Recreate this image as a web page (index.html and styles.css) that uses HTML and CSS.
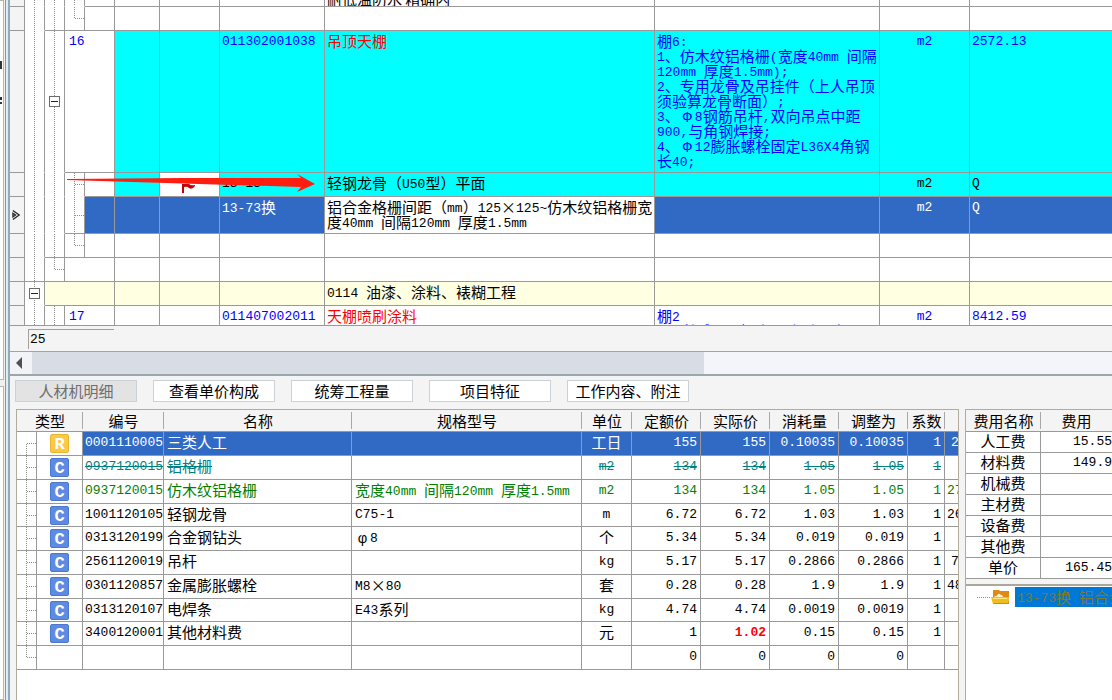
FILE: index.html
```html
<!DOCTYPE html>
<html lang="zh-CN">
<head>
<meta charset="utf-8">
<title>计价明细</title>
<link rel="stylesheet" href="styles.css">
</head>
<body>
<div class="app">
  <aside class="dock">
    <div class="dock-pane dock-top"><i class="mark mark-a"></i><i class="mark mark-b"></i></div>
    <div class="dock-pane dock-bottom"></div>
  </aside>
  <main class="main">
    <section class="bill">
      <table class="bill-table">
        <colgroup>
          <col class="w15"><col class="w20"><col class="w20"><col class="w20"><col class="w30"><col class="w45"><col class="w60"><col class="w105"><col class="w330"><col class="w225"><col class="w90"><col>
        </colgroup>
        <tbody>
        <tr class="r-cut">
          <td class="rh"></td><td class="tr v nb"></td><td class="tr v nb"></td><td class="tr v nb"></td><td></td><td></td><td></td><td></td>
          <td><div class="cut-top">耐低温防水 精确内</div></td><td></td><td></td><td></td>
        </tr>
        <tr class="r24">
          <td class="rh"></td><td class="tr v nb"></td><td class="tr v"></td><td class="tr end"></td><td></td><td></td><td></td><td></td><td></td><td></td><td></td><td></td>
        </tr>
        <tr class="r142 cyan">
          <td class="rh"></td><td class="tr v nb"></td><td class="tr v nb box"><button class="toggle" type="button" aria-label="折叠 16"></button></td>
          <td colspan="2" class="blue n plain seq">16</td><td></td><td></td><td class="blue n">011302001038</td><td class="red">吊顶天棚</td>
          <td class="blue desc">棚<span class="n">6:</span><br><span class="n">1</span>、仿木纹铝格栅<span class="n">(</span>宽度<span class="n">40mm </span>间隔<br><span class="n">120mm </span>厚度<span class="n">1.5mm);</span><br><span class="n">2</span>、专用龙骨及吊挂件（上人吊顶<br>须验算龙骨断面）<span class="n">;</span><br><span class="n">3</span>、<span class="phi">Φ</span><span class="n">8</span>钢筋吊杆<span class="n">,</span>双向吊点中距<br><span class="n">900,</span>与角钢焊接<span class="n">;</span><br><span class="n">4</span>、<span class="phi">Φ</span><span class="n">12</span>膨胀螺栓固定<span class="n">L36X4</span>角钢<br>长<span class="n">40;</span></td>
          <td class="blue n mid">m2</td><td class="blue n">2572.13</td>
        </tr>
        <tr class="r24 cyan">
          <td class="rh"></td><td class="tr v nb"></td><td class="tr v nb"></td><td class="tr v tick nb"></td><td class="plain"></td><td></td>
          <td class="plain"><svg class="flag" viewBox="0 0 14 10"><path d="M0 0h2v9H0z M2 0h5q2 2 6 1v1q-3 4-6 2-2-2-5-1z" fill="#c40000"/></svg></td>
          <td class="n">13-13</td><td>轻钢龙骨（<span class="n">U50</span>型）平面</td><td></td><td class="n mid">m2</td><td class="n">Q</td>
        </tr>
        <tr class="r37 sel">
          <td class="rh"><svg class="cursor" viewBox="0 0 10 12"><path d="M1 1l7 5-7 5M1 4l3 2-3 2z" fill="none" stroke="#222" stroke-width="1.4"/></svg></td><td class="tr v nb"></td><td class="tr v nb"></td><td class="tr v tick"></td><td></td><td></td><td></td>
          <td><span class="n">13-73</span>换</td><td class="plain">铝合金格栅间距（<span class="n">mm</span>）<span class="n">125</span>×<span class="n">125~</span>仿木纹铝格栅宽<br>度<span class="n">40mm </span>间隔<span class="n">120mm </span>厚度<span class="n">1.5mm</span></td><td></td><td class="n mid">m2</td><td class="n">Q</td>
        </tr>
        <tr class="r24">
          <td class="rh"></td><td class="tr v nb"></td><td class="tr v"></td><td class="tr end"></td><td></td><td></td><td></td><td></td><td></td><td></td><td></td><td></td>
        </tr>
        <tr class="r24">
          <td class="rh"></td><td class="tr v"></td><td class="tr end"></td><td colspan="2"></td><td></td><td></td><td></td><td></td><td></td><td></td><td></td>
        </tr>
        <tr class="r24 cream">
          <td class="rh"></td><td class="tr v nb box"><button class="toggle" type="button" aria-label="折叠 0114"></button></td><td colspan="3"></td><td></td><td></td><td></td>
          <td><span class="n">0114 </span>油漆、涂料、裱糊工程</td><td></td><td></td><td></td>
        </tr>
        <tr class="r20">
          <td class="rh"></td><td class="tr v"></td><td class="tr v"></td><td colspan="2" class="blue n seq">17</td><td></td><td></td><td class="blue n">011407002011</td>
          <td class="red">天棚喷刷涂料</td><td class="blue"><div class="cut">棚<span class="n">2</span><br><span class="n">1</span>、刮腻子、打磨，喷刷两遍面</div></td><td class="blue n mid">m2</td><td class="blue n">8412.59</td>
        </tr>
        </tbody>
      </table>
      <svg class="arrow" viewBox="0 0 250 20"><path d="M0 5L116 4 234 4 230 0 248 10 230 18 234 13 0 6z" fill="#ff1d10"/></svg>
    </section>
    <div class="status"><input class="count" type="text" value="25" aria-label="记录数"></div>
    <div class="hscroll"><button class="hbtn" type="button" aria-label="向左滚动"><svg viewBox="0 0 7 12"><path d="M6 0v12L0 6z" fill="#505050"/></svg></button><div class="thumb"></div></div>
    <section class="detail">
      <nav class="tabs">
        <button type="button" class="tab on">人材机明细</button>
        <button type="button" class="tab">查看单价构成</button>
        <button type="button" class="tab">统筹工程量</button>
        <button type="button" class="tab">项目特征</button>
        <button type="button" class="tab">工作内容、附注</button>
      </nav>
      <div class="panes">
        <div class="pane left-pane">
          <table class="res">
            <colgroup><col class="w20"><col class="w46"><col class="w81"><col class="w188"><col class="w230"><col class="w50"><col class="w69"><col class="w69"><col class="w69"><col class="w69"><col class="w37"><col></colgroup>
            <thead><tr><th colspan="2">类型</th><th>编号</th><th>名称</th><th>规格型号</th><th>单位</th><th>定额价</th><th>实际价</th><th>消耗量</th><th>调整为</th><th>系数</th><th></th></tr></thead>
            <tbody>
            <tr class="sel"><td class="tr first"></td><td class="ico"><span class="badge r">R</span></td><td class="n">0001110005</td><td>三类人工</td><td></td><td class="mid">工日</td><td class="n num">155</td><td class="n num">155</td><td class="n num">0.10035</td><td class="n num">0.10035</td><td class="n num">1</td><td class="n tail-b">2</td></tr>
            <tr class="old"><td class="tr v tick"></td><td class="ico"><span class="badge">C</span></td><td class="n">0937120015</td><td>铝格栅</td><td></td><td class="n mid">m2</td><td class="n num">134</td><td class="n num">134</td><td class="n num">1.05</td><td class="n num">1.05</td><td class="n num">1</td><td></td></tr>
            <tr class="new"><td class="tr v tick"></td><td class="ico"><span class="badge">C</span></td><td class="n">0937120015</td><td>仿木纹铝格栅</td><td>宽度<span class="n">40mm </span>间隔<span class="n">120mm </span>厚度<span class="n">1.5mm</span></td><td class="n mid">m2</td><td class="n num">134</td><td class="n num">134</td><td class="n num">1.05</td><td class="n num">1.05</td><td class="n num">1</td><td class="n">27</td></tr>
            <tr><td class="tr v tick"></td><td class="ico"><span class="badge">C</span></td><td class="n">1001120105</td><td>轻钢龙骨</td><td class="n">C75-1</td><td class="n mid">m</td><td class="n num">6.72</td><td class="n num">6.72</td><td class="n num">1.03</td><td class="n num">1.03</td><td class="n num">1</td><td class="n">26</td></tr>
            <tr><td class="tr v tick"></td><td class="ico"><span class="badge">C</span></td><td class="n">0313120199</td><td>合金钢钻头</td><td><span class="phi">φ</span><span class="n">8</span></td><td class="mid">个</td><td class="n num">5.34</td><td class="n num">5.34</td><td class="n num">0.019</td><td class="n num">0.019</td><td class="n num">1</td><td></td></tr>
            <tr><td class="tr v tick"></td><td class="ico"><span class="badge">C</span></td><td class="n">2561120019</td><td>吊杆</td><td></td><td class="n mid">kg</td><td class="n num">5.17</td><td class="n num">5.17</td><td class="n num">0.2866</td><td class="n num">0.2866</td><td class="n num">1</td><td class="n tail-b">7</td></tr>
            <tr><td class="tr v tick"></td><td class="ico"><span class="badge">C</span></td><td class="n">0301120857</td><td>金属膨胀螺栓</td><td><span class="n">M8</span>×<span class="n">80</span></td><td class="mid">套</td><td class="n num">0.28</td><td class="n num">0.28</td><td class="n num">1.9</td><td class="n num">1.9</td><td class="n num">1</td><td class="n">48</td></tr>
            <tr><td class="tr v tick"></td><td class="ico"><span class="badge">C</span></td><td class="n">0313120107</td><td>电焊条</td><td><span class="n">E43</span>系列</td><td class="n mid">kg</td><td class="n num">4.74</td><td class="n num">4.74</td><td class="n num">0.0019</td><td class="n num">0.0019</td><td class="n num">1</td><td></td></tr>
            <tr><td class="tr v tick"></td><td class="ico"><span class="badge">C</span></td><td class="n">3400120001</td><td>其他材料费</td><td></td><td class="mid">元</td><td class="n num">1</td><td class="n num hot">1.02</td><td class="n num">0.15</td><td class="n num">0.15</td><td class="n num">1</td><td></td></tr>
            <tr><td class="tr end"></td><td></td><td></td><td></td><td></td><td></td><td class="n num">0</td><td class="n num">0</td><td class="n num">0</td><td class="n num">0</td><td></td><td></td></tr>
            </tbody>
          </table>
        </div>
        <div class="pane right-pane">
          <table class="fee">
            <colgroup><col class="w75"><col></colgroup>
            <thead><tr><th>费用名称</th><th>费用</th></tr></thead>
            <tbody>
            <tr><td>人工费</td><td class="n">15.55</td></tr>
            <tr><td>材料费</td><td class="n">149.9</td></tr>
            <tr><td>机械费</td><td></td></tr>
            <tr><td>主材费</td><td></td></tr>
            <tr><td>设备费</td><td></td></tr>
            <tr><td>其他费</td><td></td></tr>
            <tr><td>单价</td><td class="n">165.45</td></tr>
            </tbody>
          </table>
          <div class="split"></div>
          <div class="node">
            <i class="dots"></i>
            <svg class="folder" viewBox="0 0 19 16"><path d="M2 1h6l1 1h9v6H2z" fill="#e08a12"/><path d="M3 8q2-2 3-1 1-4 4-1 2 0 2 2z" fill="#fff3d0"/><path d="M0 8h18l-1 7H2z" fill="#f3bd17"/><path d="M2 9h14v1H2z" fill="#ffe680"/><path d="M2 14h15l1-6v7H2z" fill="#d98a10"/></svg>
            <span class="node-text"><span class="n">13-73</span>换<span class="n"> </span>铝合金</span>
          </div>
        </div>
      </div>
    </section>
  </main>
</div>
</body>
</html>
```
FILE: styles.css
```css
* { box-sizing: border-box; }
body {
  margin: 0;
  font: 15px/15px "Noto Sans CJK SC", sans-serif;
  color: #000;
  background: #f4f4f4;
}
button, input { font: inherit; margin: 0; padding: 0; border-radius: 0; }
.n { font-family: "Liberation Mono", "Noto Sans CJK SC", monospace; font-size: 13px; white-space: pre; }
span.n { line-height: 0; vertical-align: 1px; }
.phi { display: inline-block; width: 15px; text-align: center; font-family: "Liberation Mono", monospace; font-size: 15px; line-height: 0; }

.app { display: flex; height: 100vh; overflow: hidden; }
.dock {
  flex: none;
  width: 10px;
  display: flex;
  flex-direction: column;
  gap: 6px;
  border-right: 2px solid #8fabbe;
  background: linear-gradient(to right, #f0f0f0 0 5px, #8d979c 5px 6px, #e4e9ec 6px 8px);
}
.dock-pane { width: 4px; background: #fff; border: solid #b9b5a5; border-width: 1px 1px 1px 0; overflow: hidden; }
.dock-top { height: 380px; display: flex; flex-direction: column; padding-top: 60px; gap: 28px; }
.dock-bottom { flex: 1; }
.mark { width: 2px; height: 8px; background: #333; }
.mark-b { height: 7px; background: repeating-linear-gradient(#333 0 3px, #fff 3px 5px); }
.main { flex: 1; min-width: 0; display: flex; flex-direction: column; }

/* shared grid */
table { width: 100%; table-layout: fixed; border-collapse: separate; border-spacing: 0; }
td, th { font-weight: normal; border: solid #999; border-width: 0 1px 1px 0; white-space: nowrap; overflow: hidden; }
td { padding: 2px 2px 0; vertical-align: top; text-align: left; background-color: #fff; }
td.n { padding-top: 3px; }
td:last-child { border-right: 0; }
.w15 { width: 15px; } .w20 { width: 20px; } .w30 { width: 30px; } .w37 { width: 37px; }
.w45 { width: 45px; } .w46 { width: 46px; } .w50 { width: 50px; } .w60 { width: 60px; }
.w69 { width: 69px; } .w75 { width: 75px; } .w81 { width: 81px; } .w90 { width: 90px; }
.w105 { width: 105px; } .w188 { width: 188px; } .w225 { width: 225px; } .w230 { width: 230px; } .w330 { width: 330px; }
.mid { text-align: center; }
td.num { text-align: right; padding-right: 3px; }
td.seq { padding-left: 4px; }
.blue { color: #00f; }
.red { color: #f00; }

/* tree guides */
td.tr {
  padding: 0;
  background-color: #fff;
  background-repeat: no-repeat;
  --down: repeating-linear-gradient(#8c8c8c 0 1px, #fff 1px 2px);
  --side: repeating-linear-gradient(to right, #8c8c8c 0 1px, #fff 1px 2px);
}
td.v { background-image: var(--down); background-size: 1px 100%; background-position: 9px 0; }
td.tick { background-image: var(--down), var(--side); background-size: 1px 100%, 9px 1px; background-position: 9px 0, 10px 50%; }
td.end { background-image: var(--down), var(--side); background-size: 1px 50%, 9px 1px; background-position: 9px 0, 10px 50%; }
td.first { background-image: var(--down), var(--side); background-size: 1px 50%, 9px 1px; background-position: 9px 100%, 10px 50%; }
td.nb { border-bottom-color: transparent; }
td.box { vertical-align: middle; text-align: center; }
.toggle {
  display: block;
  width: 11px;
  height: 11px;
  margin: 0 auto;
  border: 1px solid #6b6b6b;
  background: linear-gradient(#222, #222) center / 7px 1px no-repeat #fff;
}

/* bill grid */
.bill { position: relative; flex: none; }
.rh { background-color: #f4f4f4; padding: 0; }
.r-cut { height: 7px; } .r20 { height: 20px; } .r24 { height: 24px; } .r37 { height: 37px; } .r142 { height: 142px; }
.r-cut td { padding-top: 0; padding-bottom: 0; }
.cut-top { height: 6px; display: flex; align-items: flex-end; overflow: hidden; }
.cut { height: 17px; overflow: hidden; }
.cyan td:not(.rh):not(.tr):not(.plain) { background-color: #0ff; }
.cream td:not(.rh):not(.tr) { background-color: #ffffe1; }
.sel td:not(.rh):not(.tr):not(.plain):not(.ico) { background-color: #316ac5; color: #fff; }
.flag { display: block; width: 14px; height: 10px; margin: 9px 0 0 20px; }
.cursor { display: block; width: 9px; height: 12px; margin: 12px 0 0 2px; }
.arrow { position: absolute; left: 57px; top: 174px; width: 250px; height: 20px; }

.status { flex: none; height: 25px; padding: 3px 0 0 18px; }
.count { display: block; width: 86px; height: 20px; padding: 0 1px; border: solid #a0a0a0; border-width: 1px 0 0 1px; background: #f4f4f4; font-family: "Liberation Mono", monospace; font-size: 13px; }
.hscroll { flex: none; display: flex; height: 25px; border-top: 1px solid #a3a3a3; border-bottom: 2px solid #9aa7ac; background: #f4f5fa; }
.hbtn { width: 22px; border: 0; background: #f1f3f6; display: flex; align-items: center; justify-content: center; }
.hbtn svg { width: 7px; height: 12px; margin-right: 4px; }
.thumb { width: 61%; background: #d8dce4; }

/* detail area */
.detail { flex: 1; min-height: 0; display: flex; flex-direction: column; gap: 7px; padding: 4px 0 0 6px; background: #f4f4f4; }
.tabs { display: flex; gap: 16px; margin-left: -1px; }
.tab { width: 122px; height: 22px; padding-bottom: 2px; border: 1px solid #ccd0da; background: #fff; color: #000; white-space: nowrap; line-height: 15px; }
.tab.on { background: #e3e3e3; color: #6d6d6d; }
.panes { flex: 1; min-height: 0; display: flex; gap: 6px; }
.pane { background: #fff; border: solid #b0ac9c; border-width: 1px 0 0 1px; overflow: hidden; }
.left-pane { flex: 1; min-width: 0; border-right-width: 1px; }
.right-pane { flex: none; width: 147px; }
th { height: 22px; padding: 0; background: linear-gradient(#a8a8a8, #a8a8a8) right center / 1px 17px no-repeat #f4f4f4; border-right: 0; text-align: center; }
th:last-child { background-image: none; }
.res tbody tr { height: 24px; }
.res tbody tr:nth-child(4n) { height: 23px; }
.res td:nth-child(4), .res td:nth-child(5) { padding-left: 3px; }
.res td.ico { padding: 2px 0 0; }
.badge { display: block; width: 19px; height: 19px; margin: 0 auto; border: 1px solid #4a78cf; border-radius: 2px; background: #5d8be4; color: #fff; text-align: center; font: bold 17px/19px "Liberation Mono", monospace; }
.badge.r { border-color: #eeb52a; background: #fbc94a; }
.old td { color: #008080; }
.old td:not(.ico) { text-decoration: line-through; }
.new td { color: #008000; }
td.hot { color: #f00; font-weight: bold; }
td.tail-b { padding-left: 6px; }
.fee td { height: 21px; padding-top: 1px; text-align: center; }
.fee td.n { padding-top: 2px; text-align: right; padding-right: 0; }
.split { height: 7px; background: #f4f4f4; border-bottom: 2px solid #aca899; }
.node { display: flex; align-items: center; padding: 1px 0 0 11px; white-space: nowrap; }
.dots { flex: none; width: 14px; height: 1px; background: repeating-linear-gradient(to right, #8c8c8c 0 1px, #fff 1px 2px); }
.folder { flex: none; width: 19px; height: 16px; }
.node-text { flex: none; margin-left: 5px; padding: 2px 2px 3px; background: #0078d7; color: #7d7a2c; }
```
